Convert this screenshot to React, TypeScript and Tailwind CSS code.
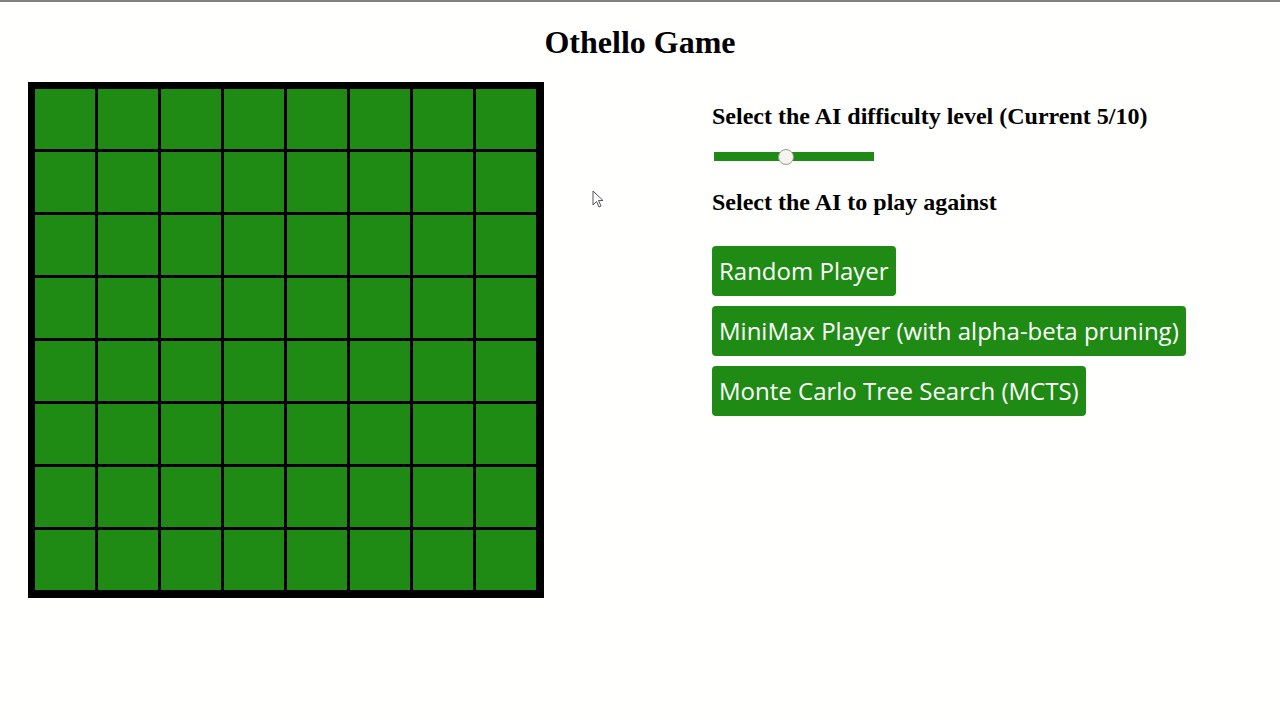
import { useState } from "react";

const players = [
  "Random Player",
  "MiniMax Player (with alpha-beta pruning)",
  "Monte Carlo Tree Search (MCTS)",
];

export default function App() {
  const [level, setLevel] = useState(5);
  const cells = Array.from({ length: 64 }, (_, i) => i);

  return (
    <div className="relative w-[1280px] h-[720px] overflow-hidden bg-[#fffffd] border-t-2 border-[#808080]">
      {/* 제목 */}
      <h1 className="pt-[22px] text-center text-[32px] leading-[36px] font-bold text-black font-['Liberation_Serif',serif]">
        Othello Game
      </h1>

      <div className="flex items-start pt-[22px]">
        {/* 보드 */}
        <div className="ml-[28px] grid grid-cols-8 gap-[3px] bg-black pt-[7px] pl-[7px] pr-[8px] pb-[8px]">
          {cells.map((c) => (
            <div key={c} className="w-[60px] h-[60px] bg-[#1f8b14]" />
          ))}
        </div>

        {/* 설정 패널 */}
        <div className="ml-[168px] pt-[20px] font-['Liberation_Serif',serif] text-black">
          <h3 className="text-[24px] leading-[28px] font-bold">
            Select the AI difficulty level (Current {level}/10)
          </h3>
          <input
            type="range"
            min={1}
            max={10}
            value={level}
            onChange={(e) => setLevel(Number(e.target.value))}
            className="mt-[22px] ml-[2px] block w-[160px] h-[9px] appearance-none bg-[#1f8b14] cursor-pointer [&::-webkit-slider-thumb]:appearance-none [&::-webkit-slider-thumb]:w-[16px] [&::-webkit-slider-thumb]:h-[16px] [&::-webkit-slider-thumb]:rounded-full [&::-webkit-slider-thumb]:bg-[#f4f4ec] [&::-webkit-slider-thumb]:border [&::-webkit-slider-thumb]:border-[#9a9a9a]"
          />
          <h3 className="mt-[27px] text-[24px] leading-[28px] font-bold">
            Select the AI to play against
          </h3>
          <div className="mt-[30px] flex flex-col items-start gap-[10px]">
            {players.map((p) => (
              <button
                key={p}
                className="h-[50px] px-[7px] rounded-[4px] bg-[#1f8b14] text-white text-[24px] font-['Open_Sans',sans-serif] whitespace-nowrap"
              >
                {p}
              </button>
            ))}
          </div>
        </div>
      </div>

      {/* 마우스 커서 */}
      <svg
        className="absolute left-[592px] top-[188px]"
        width="14"
        height="20"
        viewBox="0 0 14 20"
      >
        <path
          d="M1 1 L1 15 L4.5 11.5 L7 17 L9 16 L6.5 10.5 L11 10.5 Z"
          fill="#ffffff"
          stroke="#555"
          strokeWidth="1"
        />
      </svg>
    </div>
  );
}
